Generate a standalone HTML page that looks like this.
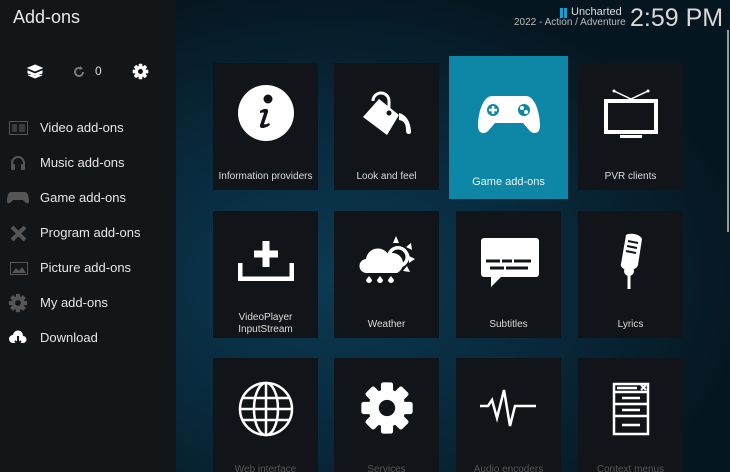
<!DOCTYPE html>
<html><head><style>
*{margin:0;padding:0;box-sizing:border-box}
html,body{width:730px;height:472px;overflow:hidden}
body{position:relative;font-family:"Liberation Sans",sans-serif;background:radial-gradient(ellipse 420px 300px at 330px 280px,#0b3a52 0%,#08283a 55%,#061620 100%);}
#side{position:absolute;left:0;top:0;width:176px;height:472px;background:#131619;}
.t{position:absolute;color:#e8e8e8}
.mi{position:absolute;left:40px;font-size:13px;color:#e6e6e6}
.ic{position:absolute;left:9px}
.tile{position:absolute;width:105px;height:127px;background:#111519;}
.tile svg{position:absolute;left:50%;transform:translateX(-50%)}
.lbl{position:absolute;left:0;right:0;text-align:center;font-size:10px;color:#dcdcdc;line-height:12px}
</style></head><body>
<svg width="0" height="0" style="position:absolute"><defs><g id="gear"><g><rect x="-2.6" y="-11" width="5.2" height="22" rx="1"/><rect x="-2.6" y="-11" width="5.2" height="22" rx="1" transform="rotate(45)"/><rect x="-2.6" y="-11" width="5.2" height="22" rx="1" transform="rotate(90)"/><rect x="-2.6" y="-11" width="5.2" height="22" rx="1" transform="rotate(135)"/><circle r="8"/></g></g></defs></svg>
<div id="side"></div>
<div class="t" style="left:13px;top:7px;font-size:18px">Add-ons</div>
<svg style="position:absolute;left:27px;top:64px" width="16" height="15" viewBox="0 0 16 15"><path d="M8 1L15 4 8 7 1 4Z M1 7l7 3 7-3v2l-7 3-7-3Z M1 11l7 3 7-3" fill="#fff" stroke="#fff" stroke-width="1"/></svg>
<svg style="position:absolute;left:72px;top:65px" width="14" height="14" viewBox="0 0 14 14"><path d="M11 7a4 4 0 1 1-2-3.5" fill="none" stroke="#777" stroke-width="2"/><path d="M8 1l3 2.5-3.5 1.5z" fill="#777"/></svg>
<div class="t" style="left:95px;top:64px;font-size:12px;color:#ddd">0</div>
<svg style="position:absolute;left:132px;top:63px" width="17" height="17" viewBox="-12 -12 24 24"><use href="#gear" fill="#fff"/><circle r="3.5" fill="#131619"/></svg>
<svg class="ic" style="top:121px" width="19" height="14"><rect x="0.5" y="0.5" width="18" height="13" fill="none" stroke="#555"/><rect x="3" y="3" width="5" height="8" fill="#3a3d40"/><rect x="10" y="3" width="6" height="8" fill="#3a3d40"/></svg>
<div class="mi" style="top:120px">Video add-ons</div>
<svg class="ic" style="top:155px;left:10px" width="16" height="15" viewBox="0 0 16 15"><path d="M2 10V8a6 6 0 0 1 12 0v2" fill="none" stroke="#555" stroke-width="2"/><rect x="1" y="9" width="4" height="6" rx="1" fill="#555"/><rect x="11" y="9" width="4" height="6" rx="1" fill="#555"/></svg>
<div class="mi" style="top:155px">Music add-ons</div>
<svg class="ic" style="top:192px;left:7px" width="22" height="12" viewBox="0 0 22 12"><path d="M4 0h14c3 0 4 6 4 9s-2 3-4 1l-2-2H6l-2 2c-2 2-4 2-4-1S1 0 4 0Z" fill="#555"/></svg>
<div class="mi" style="top:190px">Game add-ons</div>
<svg class="ic" style="top:225px;left:10px" width="17" height="16"><path d="M2 2l13 13M15 2L2 15" stroke="#555" stroke-width="4"/></svg>
<div class="mi" style="top:225px">Program add-ons</div>
<svg class="ic" style="top:262px;left:10px" width="18" height="13"><rect x="0.5" y="0.5" width="17" height="12" fill="none" stroke="#555"/><path d="M2 11l4-5 3 3 3-4 4 6z" fill="#555"/></svg>
<div class="mi" style="top:260px">Picture add-ons</div>
<svg class="ic" style="top:293px;left:8px" width="20" height="20" viewBox="-12 -12 24 24"><use href="#gear" fill="#555"/><circle r="3.5" fill="#131619"/></svg>
<div class="mi" style="top:295px">My add-ons</div>
<svg class="ic" style="top:330px;left:8px" width="20" height="16" viewBox="0 0 20 16"><path d="M5 13a4 4 0 0 1 0-8 5 5 0 0 1 10 1 3.5 3.5 0 0 1 0 7Z" fill="#fff"/><path d="M10 6v8M7 11l3 3 3-3" stroke="#131619" stroke-width="2" fill="none"/></svg>
<div class="mi" style="top:330px">Download</div>
<div style="position:absolute;left:560px;top:8px;width:3px;height:10px;background:#1aa0d0"></div>
<div style="position:absolute;left:564px;top:8px;width:3px;height:10px;background:#1aa0d0"></div>
<div class="t" style="left:571px;top:6px;font-size:11px;color:#ddd">Uncharted</div>
<div class="t" style="left:514px;top:17px;font-size:10px;color:#bbb">2022 - Action / Adventure</div>
<div class="t" style="left:630px;top:4px;font-size:25px;color:#d8d8d8">2:59 PM</div>
<div style="position:absolute;left:727px;top:30px;width:2px;height:202px;background:#999"></div>
<div class="tile" style="left:213px;top:63px"><svg style="top:22px" width="56" height="56" viewBox="0 0 56 56"><circle cx="28" cy="28" r="28" fill="#fff"/><circle cx="30" cy="14" r="4.5" fill="#111519"/><path d="M22 26c4-3 9-3 8 1l-4 12c1 1 3 0 5-1l1 2c-4 3-11 5-10 0l4-12c-1-1-3 0-4 0z" fill="#111519"/></svg><div class="lbl" style="top:108px">Information providers</div></div>
<div class="tile" style="left:334px;top:63px"><svg style="top:22px" width="56" height="56" viewBox="0 0 56 56"><path d="M14 16a8 8 0 0 1 16 0v12" fill="none" stroke="#fff" stroke-width="3"/><path d="M4 32L20 14l20 16-12 20Z" fill="#fff"/><path d="M40 28c8 2 12 10 12 20-2 2-5 1-5-2 0-6-1-10-7-11Z" fill="#fff"/><circle cx="30" cy="28" r="2.5" fill="#111519"/></svg><div class="lbl" style="top:108px">Look and feel</div></div>
<div class="tile" style="left:449px;top:56px;width:119px;height:143px;background:#0e86a6"><svg style="top:40px" width="62" height="38" viewBox="0 0 62 38"><path d="M14 0h34c9 0 14 17 14 30 0 8-7 9-11 4l-6-7H17l-6 7c-4 5-11 4-11-4C0 17 5 0 14 0Z" fill="#fff"/><circle cx="15" cy="14" r="6" fill="#0e86a6"/><path d="M15 10v8M11 14h8" stroke="#fff" stroke-width="2.5"/><circle cx="46" cy="14" r="6" fill="#0e86a6"/><circle cx="44" cy="12" r="2" fill="#fff"/><circle cx="48" cy="16" r="2" fill="#fff"/></svg><div class="lbl" style="top:120px;font-size:11px;color:#e8f4f8">Game add-ons</div></div>
<div class="tile" style="left:578px;top:63px"><svg style="top:26px" width="58" height="50" viewBox="0 0 58 50"><path d="M12 2l17 8 17-8" stroke="#fff" stroke-width="1.5" fill="none"/><circle cx="12" cy="2" r="1.5" fill="#fff"/><circle cx="46" cy="2" r="1.5" fill="#fff"/><rect x="2" y="10" width="54" height="35" fill="#fff"/><rect x="6" y="14" width="46" height="27" fill="#111519"/><rect x="18" y="46" width="22" height="3" fill="#fff"/></svg><div class="lbl" style="top:108px">PVR clients</div></div>
<div class="tile" style="left:213px;top:211px"><svg style="top:30px" width="56" height="40" viewBox="0 0 56 40"><path d="M2 22v16h52V22" fill="none" stroke="#fff" stroke-width="5"/><path d="M28 0v26M16 13h24" stroke="#fff" stroke-width="7"/></svg><div class="lbl" style="top:101px">VideoPlayer<br>InputStream</div></div>
<div class="tile" style="left:334px;top:211px"><svg style="top:24px" width="58" height="50" viewBox="0 0 58 50"><circle cx="40" cy="22" r="11" fill="#fff"/><circle cx="40" cy="22" r="7.5" fill="#111519"/><path d="M44 14.5a7.5 7.5 0 0 1 0 15a9 9 0 0 0 0-15z" fill="#fff"/><path d="M38 1l3 7h-6zM53 8l1 7-6-3zM57 24l-6 4v-7zM52 37l-7-1 4-5z" fill="#fff"/><path d="M9 38a7 7 0 0 1-1-14 12 12 0 0 1 22-5 9 9 0 0 1 9 19Z" fill="#fff"/><path d="M11 41l3 4a3 3 0 1 1-6 0zM22 41l3 4a3 3 0 1 1-6 0zM33 41l3 4a3 3 0 1 1-6 0z" fill="#fff"/></svg><div class="lbl" style="top:108px">Weather</div></div>
<div class="tile" style="left:456px;top:211px"><svg style="top:26px" width="60" height="50" viewBox="0 0 60 50"><rect x="2" y="1" width="58" height="39" rx="3" fill="#fff"/><path d="M12 38v12l12-12z" fill="#fff"/><path d="M7 24h14M23 24h10M35 24h17M11 31h14M27 31h22" stroke="#111519" stroke-width="3"/></svg><div class="lbl" style="top:108px">Subtitles</div></div>
<div class="tile" style="left:578px;top:211px"><svg style="top:22px" width="30" height="56" viewBox="0 0 30 56"><path d="M10 2c5-3 15 0 16 4l-4 26c-1 4-6 5-10 5-4 0-8-3-7-6Z" fill="#fff"/><path d="M12 8l10 2M11 13l10 2M10 18l10 2" stroke="#111519" stroke-width="2"/><circle cx="13" cy="38" r="5" fill="#fff"/><path d="M13 40v16" stroke="#fff" stroke-width="3"/></svg><div class="lbl" style="top:108px">Lyrics</div></div>
<div class="tile" style="left:213px;top:358px;height:130px"><svg style="top:22px" width="58" height="58" viewBox="0 0 58 58" fill="none" stroke="#fff" stroke-width="2.5"><circle cx="29" cy="29" r="26"/><ellipse cx="29" cy="29" rx="12" ry="26"/><path d="M29 3v52M5 18h48M3 29h52M5 40h48"/></svg><div class="lbl" style="top:106px;color:#555">Web interface</div></div>
<div class="tile" style="left:334px;top:358px;height:130px"><svg style="top:22px" width="56" height="56" viewBox="-12 -12 24 24"><use href="#gear" fill="#fff"/><circle r="3.5" fill="#111519"/></svg><div class="lbl" style="top:106px;color:#555">Services</div></div>
<div class="tile" style="left:456px;top:358px;height:130px"><svg style="top:28px" width="58" height="42" viewBox="0 0 58 42"><path d="M0 20h8l4-6 5 18 7-28 6 36 5-20h21" fill="none" stroke="#fff" stroke-width="2.5"/></svg><div class="lbl" style="top:106px;color:#555">Audio encoders</div></div>
<div class="tile" style="left:578px;top:358px;height:130px"><svg style="top:24px" width="38" height="54" viewBox="0 0 38 54" fill="none" stroke="#fff" stroke-width="2.5"><rect x="2" y="2" width="34" height="50"/><path d="M2 10h34M2 22h34M2 34h34M5 6h20M10 16h18M10 28h18M10 43h18"/><path d="M29 3l5 5M34 3l-5 5" stroke-width="2"/></svg><div class="lbl" style="top:106px;color:#555">Context menus</div></div>
</body></html>
